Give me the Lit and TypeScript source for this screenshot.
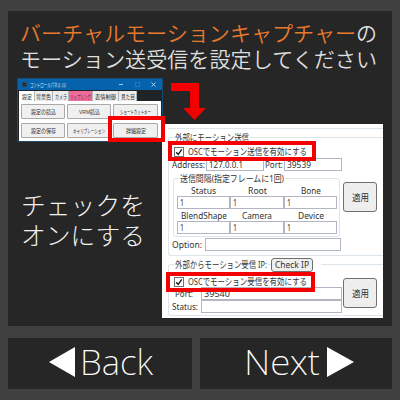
import { LitElement, html, svg, css } from "lit";
import { customElement, property } from "lit/decorators.js";

/** Text fitted to a given advance width. */
@customElement("fit-text")
export class FitText extends LitElement {
  @property() text = "";
  @property({ type: Number }) w = 50;
  @property({ type: Number }) size = 10;

  static styles = css`
    :host { display: block; flex: none; }
    svg { display: block; overflow: visible; }
    text { fill: currentColor; white-space: pre; }
  `;

  render() {
    const h = Math.round(this.size * 1.2);
    return html`<svg width=${this.w} height=${h}>
      ${svg`<text x="0" y=${h / 2 + this.size * 0.37} font-size=${this.size} textLength=${this.w} lengthAdjust="spacingAndGlyphs">${this.text}</text>`}
    </svg>`;
  }
}

const t = (text: string, w: number, size = 10) =>
  html`<fit-text .text=${text} .w=${w} .size=${size}></fit-text>`;

@customElement("control-window")
export class ControlWindow extends LitElement {
  static styles = css`
    :host {
      display: block; box-sizing: border-box; width: 146px; height: 64px;
      border: 1px solid #174a70; background: #202427; color: #333;
      padding: 0 1px;
      font-family: "Liberation Sans", "Noto Sans CJK JP", sans-serif;
    }
    .bar { margin: 0 -1px; height: 11px; background: #0562ad; color: #d5e5f3; display: flex; align-items: center; padding: 0 6px 0 4px; }
    .app { width: 5px; height: 5px; background: #20303e; margin-right: 3px; box-sizing: border-box; border: 1px solid #2f4557; }
    .ctl { margin-left: auto; display: flex; gap: 11px; }
    .ctl svg { display: block; }
    .tabs { display: flex; height: 10px; margin-top: 1px; }
    .tab { display: flex; align-items: center; justify-content: center; background: #ececec; border-right: 1px solid #b5b5b5; box-sizing: border-box; }
    .on { background: #fff; }
    .pink { background: #ee6c9b; color: #5c2038; }
    .w1 { width: 16px; } .w2 { width: 18px; } .w3 { width: 16px; } .w4 { width: 24px; } .w5 { width: 26px; } .w6 { width: 18px; }
    .body { background: #fff; height: 40px; box-sizing: border-box; padding: 3px 2px; display: grid; grid-template-columns: 44px 44px 45px; grid-template-rows: 15px 15px; gap: 4px 2px; }
    .btn { display: flex; align-items: center; justify-content: center; background: #f0f0f0; border: 1px solid #a9a9a9; box-sizing: border-box; border-radius: 1px; }
  `;

  render() {
    return html`
      <div class="bar">
        <i class="app"></i>${t("コントロールパネル (1)", 36, 6)}
        <div class="ctl">
          <svg width="5" height="5"><path d="M0 2.5h4" stroke="#a9cbe8" /></svg>
          <svg width="5" height="5"><rect x=".5" y=".5" width="4" height="4" fill="none" stroke="#2579bb" /></svg>
          <svg width="5" height="5"><path d="M.5.5l4 4m0-4l-4 4" stroke="#d5e5f3" stroke-width=".8" /></svg>
        </div>
      </div>
      <div class="tabs">
        <div class="tab on w1">${t("設定", 10, 6)}</div>
        <div class="tab w2">${t("背景色", 15, 6)}</div>
        <div class="tab w3">${t("カメラ", 12, 6)}</div>
        <div class="tab pink w4">${t("リップシンク", 21, 6)}</div>
        <div class="tab w5">${t("表情制御", 21, 6)}</div>
        <div class="tab w6">${t("見た目", 14, 6)}</div>
      </div>
      <div class="body">
        <div class="btn">${t("設定の読込", 25, 6)}</div>
        <div class="btn">${t("VRM読込", 21, 6)}</div>
        <div class="btn">${t("ショートカットキー", 31, 6)}</div>
        <div class="btn">${t("設定の保存", 25, 6)}</div>
        <div class="btn">${t("キャリブレーション", 32, 6)}</div>
        <div class="btn">${t("詳細設定", 20, 6)}</div>
      </div>
    `;
  }
}

@customElement("osc-settings")
export class OscSettings extends LitElement {
  static styles = css`
    :host {
      display: block; box-sizing: border-box; width: 221px; height: 194px;
      background: #fff; color: #333; overflow: hidden; padding-left: 6px;
      font-family: "Noto Sans", "Noto Sans CJK JP", sans-serif;
    }
    .prev { height: 4px; border-bottom: 1px solid #dce5eb; }
    .group { box-sizing: border-box; border: 1px solid #dce5eb; border-right: 0; border-radius: 3px 0 0 3px; }
    .send { margin-top: 8px; height: 119px; }
    .recv { margin-top: 8px; height: 52px; }
    .legend { display: flex; align-items: center; height: 12px; margin: -7px 0 0 5px; }
    .recv .legend { height: 13px; }
    .legend > fit-text { background: #fff; padding: 0 1px; }
    .gap { width: 8px; height: 3px; background: #fff; }
    .check { display: flex; align-items: center; gap: 4px; padding-left: 5px; height: 13px; margin-top: 2px; }
    .recv .check { height: 11px; margin-top: 5px; }
    .check svg { display: block; }
    .addr { display: grid; grid-template-columns: 34px 58px 1px 19px 58px; align-items: center; height: 13px; padding-left: 3px; }
    .input { box-sizing: border-box; height: 13px; border: 1px solid #b3b6c2; display: flex; align-items: center; padding-left: 2px; background: #fff; }
    .mid { display: flex; height: 67px; padding-left: 4px; }
    .interval { box-sizing: border-box; width: 167px; height: 59px; margin-top: 7px; border: 1px solid #dce5eb; border-radius: 3px; }
    .cells { display: grid; grid-template-columns: 53px 54px 53px; grid-template-rows: 12px 13px 12px 13px; padding: 0 0 0 3px; }
    .head { display: flex; align-items: center; justify-content: center; }
    .apply { box-sizing: border-box; width: 34px; height: 30px; border: 1px solid #707070; border-radius: 3px; background: #eee; display: flex; align-items: center; justify-content: center; }
    .mid .apply { margin: 11px 0 0 3px; }
    .ip { box-sizing: border-box; width: 42px; height: 14px; border: 1px solid #707070; border-radius: 3px; background: #eee; display: flex; align-items: center; justify-content: center; margin-left: 3px; }
    .option { display: grid; grid-template-columns: 33px 136px; align-items: center; padding-left: 3px; }
    .two { display: flex; }
    .col { width: 173px; }
    .port, .status { display: grid; grid-template-columns: 29px 141px; align-items: center; padding-left: 3px; }
    .port > fit-text { padding-left: 3px; }
    .recv .apply { margin: 7px 0 0 1px; }
  `;

  private tick() {
    return html`<svg width="10" height="10"><rect x=".5" y=".5" width="9" height="9" fill="#fff" stroke="#707070" /><path d="M2.2 5.2l2 2.2 3.6-5" fill="none" stroke="#151515" stroke-width="1.3" /></svg>`;
  }

  render() {
    const one = html`<div class="input">${t("1", 4, 9)}</div>`;
    return html`
      <div class="prev"></div>
      <div class="group send">
        <div class="legend">${t("外部にモーション送信", 74, 9.5)}</div>
        <div class="check">${this.tick()}${t("OSCでモーション送信を有効にする", 119, 9.5)}</div>
        <div class="addr">
          ${t("Address:", 33, 9)}
          <div class="input">${t("127.0.0.1", 34, 9)}</div><i></i>
          ${t("Port:", 18, 9)}
          <div class="input">${t("39539", 24, 9)}</div>
        </div>
        <div class="mid">
          <div class="interval">
            <div class="legend">${t("送信間隔(指定フレームに1回)", 104, 9.5)}</div>
            <div class="cells">
              <div class="head">${t("Status", 25, 9)}</div>
              <div class="head">${t("Root", 19, 9)}</div>
              <div class="head">${t("Bone", 20, 9)}</div>
              ${one}${one}${one}
              <div class="head">${t("BlendShape", 46, 9)}</div>
              <div class="head">${t("Camera", 30, 9)}</div>
              <div class="head">${t("Device", 26, 9)}</div>
              ${one}${one}${one}
            </div>
          </div>
          <div class="apply">${t("適用", 17, 9.5)}</div>
        </div>
        <div class="option">${t("Option:", 30, 9)}<div class="input"></div></div>
      </div>
      <div class="group recv">
        <div class="legend">
          ${t("外部からモーション受信 IP:", 92, 9.5)}
          <div class="ip">${t("Check IP", 34, 9)}</div>
          <i class="gap"></i>
        </div>
        <div class="two">
          <div class="col">
            <div class="check">${this.tick()}${t("OSCでモーション受信を有効にする", 119, 9.5)}</div>
            <div class="port">${t("Port:", 18, 9)}<div class="input">${t("39540", 26, 9)}</div></div>
            <div class="status">${t("Status:", 26, 9)}<div class="input"></div></div>
          </div>
          <div class="apply">${t("適用", 17, 9.5)}</div>
        </div>
      </div>
    `;
  }
}

@customElement("app-root")
export class AppRoot extends LitElement {
  static styles = css`
    :host {
      display: block; box-sizing: border-box; width: 400px; height: 400px;
      background: #404040; color: #f2f2f2; padding: 11px 8px; overflow: hidden;
      font-family: "Liberation Sans", "Noto Sans CJK JP", sans-serif;
    }
    .panel { position: relative; width: 384px; height: 315px; background: #262626; box-sizing: border-box; padding: 10px 0 0 9px; }
    .title { display: grid; gap: 1px; padding-left: 3px; font-weight: 350; color: #dedede; }
    .line { display: flex; height: 25px; align-items: center; }
    .accent { color: #e8792d; }
    .shots { display: flex; margin-top: 6px; }
    .left { width: 145px; }
    .note { display: grid; gap: 1px; margin: 49px 0 0 4px; font-weight: 300; }
    osc-settings { margin-top: 46px; }
    .mark { position: absolute; box-sizing: border-box; border: 4px solid #f40000; }
    .m1 { left: 100px; top: 105px; width: 57px; height: 26px; }
    .m2 { left: 160px; top: 130px; width: 148px; height: 20px; }
    .m3 { left: 158px; top: 261px; width: 149px; height: 20px; }
    .arrow { position: absolute; left: 163px; top: 72px; }
    .nav { display: flex; gap: 8px; margin-top: 12px; font-family: "Noto Sans", sans-serif; font-weight: 200; color: #fff; }
    .nav > div { display: flex; align-items: center; height: 51px; background: #262626; box-sizing: border-box; }
    .back { width: 184px; padding-left: 41px; gap: 5px; }
    .next { width: 192px; padding-left: 44px; gap: 7px; }
    .nav svg { display: block; margin-top: -3px; }
    .nav fit-text { margin-top: -3px; }
  `;

  render() {
    return html`
      <div class="panel">
        <div class="title">
          <div class="line"><span class="accent">${t("バーチャルモーションキャプチャー", 336, 21)}</span>${t("の", 21, 21)}</div>
          <div class="line">${t("モーション送受信を設定してください", 357, 21)}</div>
        </div>
        <div class="shots">
          <div class="left">
            <control-window></control-window>
            <div class="note">${t("チェックを", 124, 24.5)}${t("オンにする", 124, 24.5)}</div>
          </div>
          <osc-settings></osc-settings>
        </div>
        <div class="mark m1"></div>
        <div class="mark m2"></div>
        <div class="mark m3"></div>
        <svg class="arrow" width="36" height="38"><path d="M0 0h28v25h7L23.5 37 12 25h7V8H0z" fill="#f40000" /></svg>
      </div>
      <div class="nav">
        <div class="back">
          <svg width="26" height="30"><path d="M0 15L26 0v30z" fill="#fff" /></svg>
          ${t("Back", 73, 34.5)}
        </div>
        <div class="next">
          ${t("Next", 76, 34.5)}
          <svg width="27" height="30"><path d="M27 15L0 0v30z" fill="#fff" /></svg>
        </div>
      </div>
    `;
  }
}
